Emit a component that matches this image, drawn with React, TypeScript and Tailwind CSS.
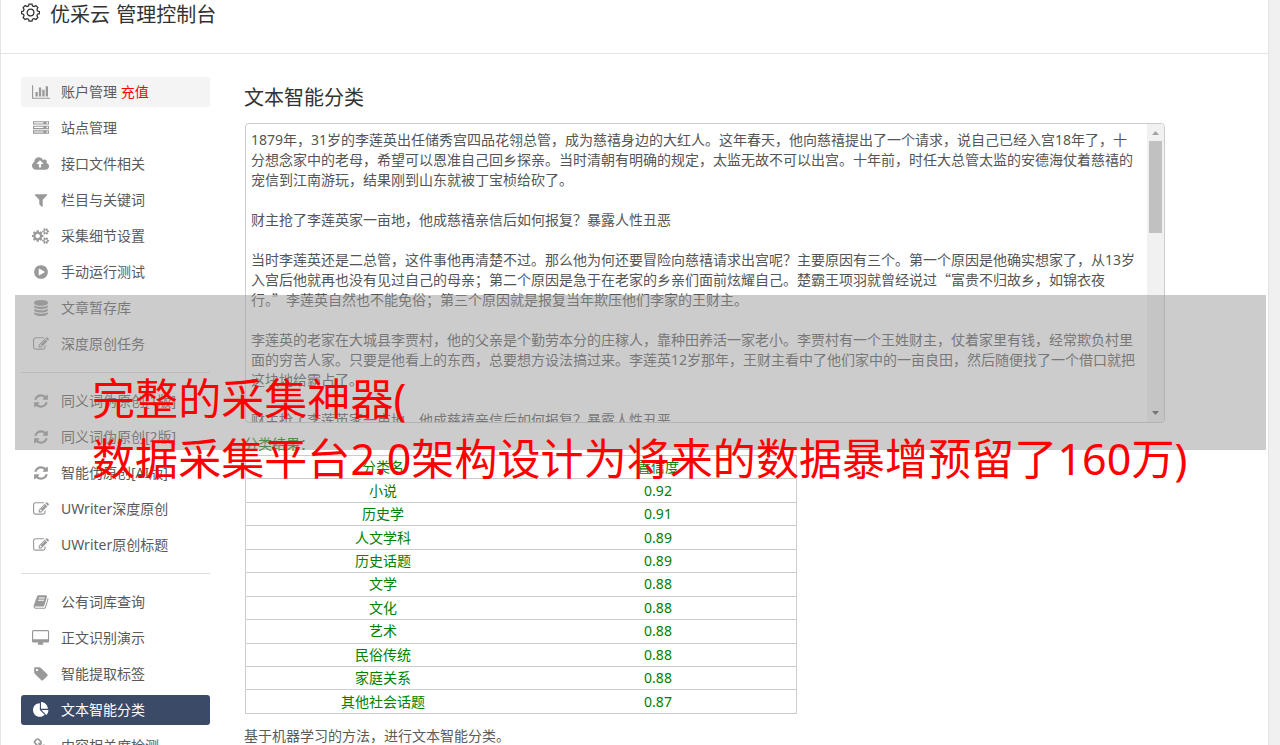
import type { ReactNode } from "react";

type IconProps = { box: string; d: string; w: number };

// Font Awesome 4 outlines, w is the advance width at 16px
const icons: Record<string, IconProps> = {
  chart: {
    box: "0 0 2048 1792",
    w: 18.3,
    d: "M640 896v512h-256v-512h256zm384-512v1024h-256v-1024h256zm1024 1152v128h-2048v-1536h128v1408h1920zm-640-896v768h-256v-768h256zm384-384v1152h-256v-1152h256z",
  },
  server: {
    box: "0 0 1792 1792",
    w: 16,
    d: "M128 1408h1024v-128h-1024v128zm0-512h1024v-128h-1024v128zm1568 448q0-40-28-68t-68-28-68 28-28 68 28 68 68 28 68-28 28-68zm-1568-960h1024v-128h-1024v128zm1568 448q0-40-28-68t-68-28-68 28-28 68 28 68 68 28 68-28 28-68zm0-512q0-40-28-68t-68-28-68 28-28 68 28 68 68 28 68-28 28-68zm96 832v384h-1792v-384h1792zm0-512v384h-1792v-384h1792zm0-512v384h-1792v-384h1792z",
  },
  cloud: {
    box: "0 0 1920 1792",
    w: 17.1,
    d: "M1280 864q0-14-9-23l-352-352q-9-9-23-9t-23 9l-351 351q-10 12-10 24 0 14 9 23t23 9h224v352q0 13 9.5 22.5t22.5 9.5h192q13 0 22.5-9.5t9.5-22.5v-352h224q13 0 22.5-9.5t9.5-22.5zm640 288q0 159-112.5 271.5t-271.5 112.5h-1088q-185 0-316.5-131.5t-131.5-316.5q0-130 70-240t188-165q-2-30-2-43 0-212 150-362t362-150q156 0 285.5 87t188.5 231q71-62 166-62 106 0 181 75t75 181q0 76-41 138 130 31 213.5 135.5t83.5 238.5z",
  },
  filter: {
    box: "0 0 1792 1792",
    w: 16,
    d: "M1595 295q17 41-14 70l-493 493v742q0 42-39 59-13 5-25 5-27 0-45-19l-256-256q-19-19-19-45v-486l-493-493q-31-29-14-70 17-39 59-39h1280q42 0 59 39z",
  },
  cogs: {
    box: "0 0 1920 1792",
    w: 17.1,
    d: "M896 896q0-106-75-181t-181-75-181 75-75 181 75 181 181 75 181-75 75-181zm768 512q0-52-38-90t-90-38-90 38-38 90q0 53 37.5 90.5t90.5 37.5 90.5-37.5 37.5-90.5zm0-1024q0-52-38-90t-90-38-90 38-38 90q0 53 37.5 90.5t90.5 37.5 90.5-37.5 37.5-90.5zm-384 421v185q0 10-7 19.5t-16 10.5l-155 24q-11 35-32 76 34 48 90 115 7 11 7 20 0 12-7 19-23 30-82.5 89.5t-78.5 59.5q-11 0-21-7l-115-90q-37 19-77 31-11 108-23 155-7 24-30 24h-186q-11 0-20-7.5t-10-17.5l-23-153q-34-10-75-31l-118 89q-7 7-20 7-11 0-21-8-144-133-144-160 0-9 7-19 10-14 41-53t47-61q-23-44-35-82l-152-24q-10-1-17-9.5t-7-19.5v-185q0-10 7-19.5t16-10.5l155-24q11-35 32-76-34-48-90-115-7-11-7-20 0-12 7-20 22-30 82-89t79-59q11 0 21 7l115 90q34-18 77-32 11-108 23-154 7-24 30-24h186q11 0 20 7.5t10 17.5l23 153q34 10 75 31l118-89q8-7 20-7 11 0 21 8 144 133 144 160 0 8-7 19-12 16-42 54t-45 60q23 48 34 82l152 23q10 2 17 10.5t7 19.5zm640 533v140q0 16-149 31-12 27-30 52 51 113 51 138 0 4-4 7-122 71-124 71-8 0-46-47t-52-68q-20 2-30 2t-30-2q-14 21-52 68t-46 47q-2 0-124-71-4-3-4-7 0-25 51-138-18-25-30-52-149-15-149-31v-140q0-16 149-31 13-29 30-52-51-113-51-138 0-4 4-7 4-2 35-20t59-34 30-16q8 0 46 46.5t52 67.5q20-2 30-2t30 2q51-71 92-112l6-2q4 0 124 70 4 3 4 7 0 25-51 138 17 23 30 52 149 15 149 31zm0-1024v140q0 16-149 31-12 27-30 52 51 113 51 138 0 4-4 7-122 71-124 71-8 0-46-47t-52-68q-20 2-30 2t-30-2q-14 21-52 68t-46 47q-2 0-124-71-4-3-4-7 0-25 51-138-18-25-30-52-149-15-149-31v-140q0-16 149-31 13-29 30-52-51-113-51-138 0-4 4-7 4-2 35-20t59-34 30-16q8 0 46 46.5t52 67.5q20-2 30-2t30 2q51-71 92-112l6-2q4 0 124 70 4 3 4 7 0 25-51 138 17 23 30 52 149 15 149 31z",
  },
  play: {
    box: "0 0 1792 1792",
    w: 16,
    d: "M896 128q209 0 385.5 103t279.5 279.5 103 385.5-103 385.5-279.5 279.5-385.5 103-385.5-103-279.5-279.5-103-385.5 103-385.5 279.5-279.5 385.5-103zm384 823q32-18 32-55t-32-55l-544-320q-31-19-64-1-32 19-32 56v640q0 37 32 56 16 8 32 8 17 0 32-9z",
  },
  database: {
    box: "0 0 1792 1792",
    w: 16,
    d: "M896 768q237 0 443-43t325-127v170q0 69-103 128t-280 93.5-385 34.5-385-34.5-280-93.5-103-128v-170q119 84 325 127t443 43zm0 768q237 0 443-43t325-127v170q0 69-103 128t-280 93.5-385 34.5-385-34.5-280-93.5-103-128v-170q119 84 325 127t443 43zm0-384q237 0 443-43t325-127v170q0 69-103 128t-280 93.5-385 34.5-385-34.5-280-93.5-103-128v-170q119 84 325 127t443 43zm0-1152q208 0 385 34.5t280 93.5 103 128v128q0 69-103 128t-280 93.5-385 34.5-385-34.5-280-93.5-103-128v-128q0-69 103-128t280-93.5 385-34.5z",
  },
  edit: {
    box: "0 0 1792 1792",
    w: 16,
    d: "M888 1184l116-116-152-152-116 116v56h96v96h56zm440-720q-16-16-33 1l-350 350q-17 17-1 33t33-1l350-350q17-17 1-33zm80 594v190q0 119-84.5 203.5t-203.5 84.5h-832q-119 0-203.5-84.5t-84.5-203.5v-832q0-119 84.5-203.5t203.5-84.5h832q63 0 117 25 15 7 18 23 3 17-9 29l-49 49q-14 14-32 8-23-6-45-6h-832q-66 0-113 47t-47 113v832q0 66 47 113t113 47h832q66 0 113-47t47-113v-126q0-13 9-22l64-64q15-15 35-7t20 29zm-96-738l288 288-672 672h-288v-288zm444 132l-92 92-288-288 92-92q28-28 68-28t68 28l152 152q28 28 28 68t-28 68z",
  },
  refresh: {
    box: "0 0 1792 1792",
    w: 16,
    d: "M1639 1056q0 5-1 7-64 268-268 434.5t-478 166.5q-146 0-282.5-55t-243.5-157l-129 129q-19 19-45 19t-45-19-19-45v-448q0-26 19-45t45-19h448q26 0 45 19t19 45-19 45l-137 137q71 66 161 102t187 36q134 0 250-65t186-179q11-17 53-117 8-23 30-23h192q13 0 22.5 9.5t9.5 22.5zm25-800v448q0 26-19 45t-45 19h-448q-26 0-45-19t-19-45 19-45l138-138q-148-137-349-137-134 0-250 65t-186 179q-11 17-53 117-8 23-30 23h-199q-13 0-22.5-9.5t-9.5-22.5v-7q65-268 270-434.5t480-166.5q146 0 284 55.5t245 156.5l130-129q19-19 45-19t45 19 19 45z",
  },
  book: {
    box: "0 0 1792 1792",
    w: 16,
    d: "M1703 478q40 57 18 129l-275 906q-19 64-76.5 107.5t-122.5 43.5h-923q-77 0-148.5-53.5t-99.5-131.5q-24-67-2-127 0-4 3-27t4-37q1-8-3-21.5t-3-19.5q2-11 8-21t16.5-23.5 16.5-23.5q23-38 45-91.5t30-91.5q3-10 .5-30t-.5-28q3-11 17-28t17-23q21-36 42-92t25-90q1-9-2.5-32t.5-28q4-13 22-30.5t22-22.5q19-26 42.5-84.5t27.5-96.5q1-8-3-25.5t-2-26.5q2-8 9-18t18-23 17-21q8-12 16.5-30.5t15-35 16-36 19.5-32 26.5-23.5 36-11.5 47.5 5.5l-1 3q38-9 51-9h761q74 0 114 56t18 130l-274 906q-36 119-71.5 153.5t-128.5 34.5h-869q-27 0-38 15-11 16-1 43 24 70 144 70h923q29 0 56-15.5t35-41.5l300-987q7-22 5-57 38 15 59 43zm-1064 2q-4 13 2 22.5t20 9.5h608q13 0 25.5-9.5t16.5-22.5l21-64q4-13-2-22.5t-20-9.5h-608q-13 0-25.5 9.5t-16.5 22.5zm-83 256q-4 13 2 22.5t20 9.5h608q13 0 25.5-9.5t16.5-22.5l21-64q4-13-2-22.5t-20-9.5h-608q-13 0-25.5 9.5t-16.5 22.5z",
  },
  desktop: {
    box: "64 0 1920 1792",
    w: 17.1,
    d: "M1856 992v-832q0-13-9.5-22.5t-22.5-9.5h-1600q-13 0-22.5 9.5t-9.5 22.5v832q0 13 9.5 22.5t22.5 9.5h1600q13 0 22.5-9.5t9.5-22.5zm128-832v1088q0 66-47 113t-113 47h-544q0 37 16 77.5t32 71 16 43.5q0 26-19 45t-45 19h-512q-26 0-45-19t-19-45q0-14 16-44t32-70 16-78h-544q-66 0-113-47t-47-113v-1088q0-66 47-113t113-47h1600q66 0 113 47t47 113z",
  },
  tag: {
    box: "0 0 1792 1792",
    w: 16,
    d: "M576 448q0-53-37.5-90.5t-90.5-37.5-90.5 37.5-37.5 90.5 37.5 90.5 90.5 37.5 90.5-37.5 37.5-90.5zm1067 576q0 53-37 90l-491 492q-39 37-91 37-53 0-90-37l-715-716q-38-37-64.5-101t-26.5-117v-416q0-52 38-90t90-38h416q53 0 117 26.5t102 64.5l715 714q37 39 37 91z",
  },
  pie: {
    box: "0 0 1792 1792",
    w: 16,
    d: "M768 890l546 546q-106 108-247.5 168t-298.5 60q-209 0-385.5-103t-279.5-279.5-103-385.5 103-385.5 279.5-279.5 385.5-103v762zm187 6h773q0 157-60 298.5t-168 247.5zm709-128h-768v-768q209 0 385.5 103t279.5 279.5 103 385.5z",
  },
  link: {
    box: "0 0 1792 1792",
    w: 16,
    d: "M1520 1216q0-40-28-68l-208-208q-28-28-68-28-42 0-72 32 3 3 19 18.500t21.500 21.500 15 19 13 25.500 3.500 27.500q0 40-28 68t-68 28q-15 0-27.500-3.500t-25.500-13-19-15-21.500-21.500-18.500-19q-33 31-33 73 0 40 28 68l206 207q27 27 68 27 40 0 68-26l147-146q28-28 28-67zm-703-705q0-40-28-68l-206-207q-28-28-68-28-39 0-68 27l-147 146q-28 28-28 67 0 40 28 68l208 208q27 27 68 27 42 0 72-31-3-3-19-18.500t-21.500-21.500-15-19-13-25.500-3.500-27.500q0-40 28-68t68-28q15 0 27.500 3.500t25.500 13 19 15 21.500 21.500 18.500 19q33-31 33-73zm895 705q0 120-85 203l-147 146q-83 83-203 83-121 0-204-85l-206-207q-83-83-83-203 0-123 88-209l-88-88q-86 88-208 88-120 0-204-84l-208-208q-84-84-84-204t85-203l147-146q83-83 203-83 121 0 204 85l206 207q83 83 83 203 0 123-88 209l88 88q86-88 208-88 120 0 204 84l208 208q84 84 84 204z",
  },
};

function Icon({ name }: { name: string }) {
  const { box, d, w } = icons[name];
  return (
    <svg viewBox={box} width={w} height={16} fill="currentColor" className="shrink-0">
      <path d={d} />
    </svg>
  );
}

type Item = { icon: string; label: ReactNode; state?: "hover" | "active" };

const groups: Item[][] = [
  [
    { icon: "chart", label: <>账户管理 <span className="text-[#f00]">充值</span></>, state: "hover" },
    { icon: "server", label: "站点管理" },
    { icon: "cloud", label: "接口文件相关" },
    { icon: "filter", label: "栏目与关键词" },
    { icon: "cogs", label: "采集细节设置" },
    { icon: "play", label: "手动运行测试" },
    { icon: "database", label: "文章暂存库" },
    { icon: "edit", label: "深度原创任务" },
  ],
  [
    { icon: "refresh", label: "同义词伪原创[1版]" },
    { icon: "refresh", label: "同义词伪原创[2版]" },
    { icon: "refresh", label: "智能伪原创[AI版]" },
    { icon: "edit", label: "UWriter深度原创" },
    { icon: "edit", label: "UWriter原创标题" },
  ],
  [
    { icon: "book", label: "公有词库查询" },
    { icon: "desktop", label: "正文识别演示" },
    { icon: "tag", label: "智能提取标签" },
    { icon: "pie", label: "文本智能分类", state: "active" },
    { icon: "link", label: "内容相关度检测" },
  ],
];

const lines = [
  "1879年，31岁的李莲英出任储秀宫四品花翎总管，成为慈禧身边的大红人。这年春天，他向慈禧提出了一个请求，说自己已经入宫18年了，十",
  "分想念家中的老母，希望可以恩准自己回乡探亲。当时清朝有明确的规定，太监无故不可以出宫。十年前，时任大总管太监的安德海仗着慈禧的",
  "宠信到江南游玩，结果刚到山东就被丁宝桢给砍了。",
  "",
  "财主抢了李莲英家一亩地，他成慈禧亲信后如何报复？暴露人性丑恶",
  "",
  "当时李莲英还是二总管，这件事他再清楚不过。那么他为何还要冒险向慈禧请求出宫呢？主要原因有三个。第一个原因是他确实想家了，从13岁",
  "入宫后他就再也没有见过自己的母亲；第二个原因是急于在老家的乡亲们面前炫耀自己。楚霸王项羽就曾经说过“富贵不归故乡，如锦衣夜",
  "行。”李莲英自然也不能免俗；第三个原因就是报复当年欺压他们李家的王财主。",
  "",
  "李莲英的老家在大城县李贾村，他的父亲是个勤劳本分的庄稼人，靠种田养活一家老小。李贾村有一个王姓财主，仗着家里有钱，经常欺负村里",
  "面的穷苦人家。只要是他看上的东西，总要想方设法搞过来。李莲英12岁那年，王财主看中了他们家中的一亩良田，然后随便找了一个借口就把",
  "这块地给霸占了。",
  "",
  "财主抢了李莲英家一亩地，他成慈禧亲信后如何报复？暴露人性丑恶",
];

const results = [
  ["分类名", "置信度"],
  ["小说", "0.92"],
  ["历史学", "0.91"],
  ["人文学科", "0.89"],
  ["历史话题", "0.89"],
  ["文学", "0.88"],
  ["文化", "0.88"],
  ["艺术", "0.88"],
  ["民俗传统", "0.88"],
  ["家庭关系", "0.88"],
  ["其他社会话题", "0.87"],
];

function Sidebar() {
  return (
    <nav className="w-[189px] shrink-0 pt-[23px]">
      {groups.map((items, i) => (
        <ul
          key={i}
          className={`flex flex-col gap-1.5 ${i > 0 ? "mt-[13px] border-t border-[#ddd] pt-[13px]" : ""}`}
        >
          {items.map((item, j) => (
            <li
              key={j}
              className={`flex h-[30px] items-center rounded-[3px] ${
                item.state === "active"
                  ? "bg-[#3b4a66] text-white"
                  : item.state === "hover"
                    ? "bg-[#f4f4f4]"
                    : ""
              }`}
            >
              <span
                className={`ml-[10px] flex w-5 justify-center ${
                  item.state === "active" ? "text-white" : "text-[#999]"
                }`}
              >
                <Icon name={item.icon} />
              </span>
              <span className="ml-[10px] whitespace-nowrap">{item.label}</span>
            </li>
          ))}
        </ul>
      ))}
    </nav>
  );
}

// Curly quotes take the CJK face so that they are full width
function Line({ text }: { text: string }) {
  return (
    <p className="h-5 leading-5 whitespace-nowrap">
      {text.split(/([“”])/).map((part, i) =>
        i % 2 ? (
          <span key={i} className="font-['Noto_Sans_CJK_SC',sans-serif] leading-none">
            {part}
          </span>
        ) : (
          part
        ),
      )}
    </p>
  );
}

function TextBox() {
  return (
    <div className="mt-[11px] ml-px flex h-[300px] w-[920px] overflow-hidden rounded border border-[#ccc]">
      <div className="flex-1 overflow-hidden px-[5px] pt-1.5 text-[#555] [font-kerning:none]">
        {lines.map((line, i) => (
          <Line key={i} text={line} />
        ))}
      </div>
      <div className="flex w-[17px] flex-col items-center bg-[#f1f1f1]">
        <svg viewBox="0 0 17 17" className="h-[17px] w-[17px] shrink-0" fill="#a3a3a3">
          <path d="M5 11h7L8.500 7z" />
        </svg>
        <div className="h-[92px] w-[13px] bg-[#c1c1c1]" />
        <svg viewBox="0 0 17 17" className="mt-auto h-[17px] w-[17px] shrink-0" fill="#505050">
          <path d="M5 6h7L8.500 10z" />
        </svg>
      </div>
    </div>
  );
}

export default function App() {
  return (
    <div className="relative h-[745px] w-[1280px] overflow-hidden bg-[#f0f0f0] font-['Noto_Sans','Noto_Sans_CJK_SC',sans-serif] text-sm text-[#5a5a5a]">
      <div className="h-full w-[1269px] border-x border-[#e3e3e3] bg-white">
        <header className="flex h-[54px] items-start border-b border-[#e5e5e5] pl-5 text-[#333]">
          <svg
            viewBox="0 0 18 18"
            className="mt-[3px] h-[19px] w-[19px]"
            fill="none"
            stroke="currentColor"
            strokeWidth="1.200"
          >
            <path d="M7.600 1h2.800l.5 1.800 1.500.6 1.700-.9 1.900 1.900-.9 1.700.6 1.500 1.800.5v2l-1.800.5-.6 1.500.9 1.700-1.900 1.900-1.700-.9-1.500.6-.5 1.800H7.600l-.5-1.800-1.500-.6-1.700.9L2 13.800l.9-1.700-.6-1.500-1.800-.5v-2l1.800-.5.6-1.500L2 4.400l1.900-1.900 1.700.9 1.500-.6z" />
            <circle cx="9" cy="9.100" r="3.200" />
          </svg>
          <h1 className="ml-2.5 pt-px text-xl leading-7 [word-spacing:1px]">优采云 管理控制台</h1>
        </header>

        <div className="flex h-[691px] overflow-hidden pl-5">
          <Sidebar />
          <main className="ml-[34px] pt-[30px]">
            <h2 className="text-xl leading-7 text-[#333]">文本智能分类</h2>
            <TextBox />
            <p className="mt-2.5 h-[22px] leading-[22px] text-[#008000]">分类结果：</p>
            <table className="ml-px w-[552px] table-fixed border-collapse border border-[#ccc] text-center text-[#008000]">
              <tbody>
                {results.map(([name, score]) => (
                  <tr key={name} className="h-[23.450px] border-b border-[#ccc]">
                    <td className="p-0 pr-px leading-[22px]">{name}</td>
                    <td className="p-0 pr-px leading-[22px]">{score}</td>
                  </tr>
                ))}
              </tbody>
            </table>
            <p className="mt-2.5 leading-6">基于机器学习的方法，进行文本智能分类。</p>
          </main>
        </div>
      </div>

      {/* Caption banner */}
      <div className="absolute top-[295px] left-[15px] h-[155px] w-[1251px] bg-[#999]/50" />
      <div className="absolute top-[369px] left-[92px] text-[43px] leading-[60px] tracking-[0.07px] whitespace-nowrap text-[#f00]">
        <p>完整的采集神器(</p>
        <p>数据采集平台2.0架构设计为将来的数据暴增预留了160万)</p>
      </div>
    </div>
  );
}
